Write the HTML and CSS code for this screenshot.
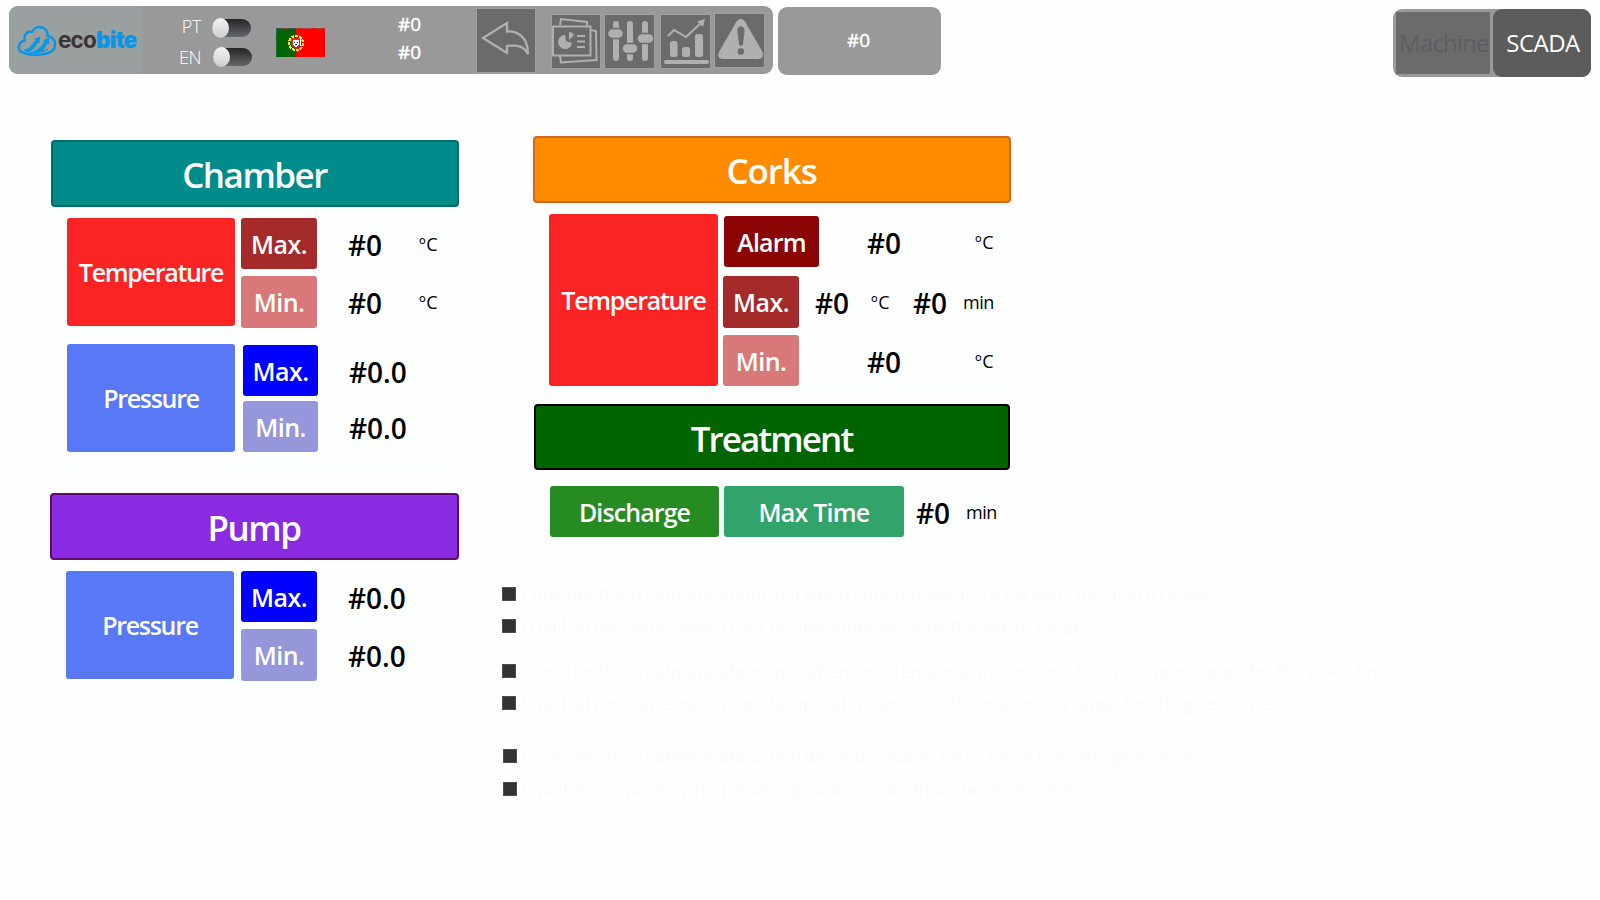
FILE: index.html
```html
<!DOCTYPE html>
<html lang="en">
<head>
<meta charset="utf-8">
<title>Ecobite SCADA settings</title>
<link rel="stylesheet" href="styles.css">
</head>
<body>
<header class="topbar">
  <div class="toolbar">
    <div class="logo">
      <svg class="cloud" width="40" height="32" viewBox="0 0 40 32" fill="none" stroke="#0a96e6" stroke-width="2.5" stroke-linejoin="round">
        <path d="M7 28C3 27 1 24 2 21C2.500 18 5 16 8 15.500C6 10 10 6 15 7C17 3 21 1 25 2.500C29 4 31 7 30.500 11C35 11.500 38 15 38 19C38 24 35 27 31 28C25 30 15 31 7 28Z"/>
        <path d="M7 25C15 23 16 17 19 15L17.500 14L23 12L22.500 18L21 17C18 22 16 26 10 27ZM17 26C24 24 25 19 28 16L26 15.500L32 13L32 19L30 18C28 24 26 26 20 28Z" fill="#0a96e6" stroke-width=".5"/>
        <path d="M12 28C20 27 25 28 31 24" stroke-width="1.500"/>
      </svg>
      <span class="brand">eco<b>bite</b></span>
    </div>
    <div class="langs">
      <div class="lang"><span>PT</span><i class="switch"></i></div>
      <div class="lang lang-en"><span>EN</span><i class="switch"></i></div>
    </div>
    <svg class="flag" width="49" height="29" viewBox="0 0 49 29" shape-rendering="crispEdges">
      <rect width="49" height="29" fill="#f00"/><rect width="20" height="29" fill="#006400"/>
      <path d="M0 .5H49" stroke="#b63c40" stroke-dasharray="12 3 7 2"/><path d="M0 .5H20M.5 0V29" stroke="#27604c" stroke-dasharray="8 3"/>
      <circle cx="20" cy="15" r="7" fill="none" stroke="#f4ef13" stroke-width="2" stroke-dasharray="3 1"/>
      <path d="M15 10H25V17L20 21L15 17Z" fill="#e92520"/><path d="M17 12H23V17L20 19L17 17Z" fill="#fff"/>
      <path d="M18 14H19M21 14H22M19 16H21M24 11V17" stroke="#234cae"/><path d="M24.500 10V18" stroke="#fff"/>
    </svg>
    <div class="counts"><span>#0</span><span>#0</span></div>
    <button class="tool back" aria-label="Back"><svg width="58" height="63" viewBox="0 0 58 63" fill="none" stroke="#b0b0b0" stroke-width="2.300"><path d="M6 29L30 14V22.500C42 22 51 29 51 45C47 37 41 36 30 37V44Z"/></svg></button>
    <button class="tool reports" aria-label="Reports"><svg width="48" height="53" viewBox="0 0 48 53" fill="none" stroke="#b0b0b0" stroke-width="2"><path d="M8 10L9 4L35 7V11M39 15L44 16L44.500 45L9 47.500L8 41"/><path d="M1 11.500H38.500V40.500H1Z"/><path d="M25 21H33M25 26.500H33M25 32H33"/><path d="M13 20A7 7 0 1 0 20 28L14 26Z" fill="#b0b0b0" stroke="none"/><path d="M17 17V25L22 20C21 18 19 17 17 17Z" fill="#b0b0b0" stroke="none"/></svg></button>
    <button class="tool sliders" aria-label="Settings"><svg width="49" height="53" viewBox="0 0 49 53" fill="#b0b0b0"><rect x="8" y="6" width="6" height="40" rx="3"/><rect x="22" y="6" width="6" height="40" rx="3"/><rect x="37" y="6" width="6" height="40" rx="3"/><g stroke="#6b6b6b" stroke-width="1.500"><rect x="2.500" y="13.500" width="16" height="10" rx="5"/><rect x="17" y="28.500" width="16" height="10" rx="5"/><rect x="32" y="18.500" width="17" height="10" rx="5"/></g></svg></button>
    <button class="tool chart" aria-label="Trends"><svg width="49" height="53" viewBox="0 0 49 53" fill="#b0b0b0"><rect x="9" y="26" width="7.500" height="16" rx="2.500"/><rect x="21" y="32" width="8" height="10" rx="2.500"/><rect x="34" y="19" width="8" height="23" rx="2.500"/><rect x="3" y="45" width="45" height="4" rx="2"/><path d="M7 21L13 15L25 22L41 7" fill="none" stroke="#b0b0b0" stroke-width="2"/><path d="M44 4L36 6.500L42 12Z"/></svg></button>
    <button class="tool alarms" aria-label="Alarms"><svg width="49" height="53" viewBox="0 0 49 53"><path d="M21.500 7.500Q25.500 2 30 7.500L47.500 38Q49.500 44.500 43 45H8Q1.500 44.500 4 38Z" fill="#b0b0b0"/><path d="M25.800 12.500C22.500 12.500 22 15 22.500 19L24 30C24.500 32.500 27.500 32.500 28 30L29.300 19C29.800 15 29 12.500 25.800 12.500Z" fill="#6b6b6b"/><circle cx="25.800" cy="37.500" r="3.200" fill="#6b6b6b"/></svg></button>
  </div>
  <div class="status">#0</div>
  <nav class="modes"><span class="mode">Machine</span><span class="mode mode-on">SCADA</span></nav>
</header>

<main class="page">
  <div class="left">
    <section class="panel chamber">
      <h2 class="title teal">Chamber</h2>
      <div class="body">
        <div class="group">
          <div class="tile red">Temperature</div>
          <div class="rows gap7">
            <div class="row"><div class="tag brown">Max.</div><span class="value">#0</span><span class="unit">ºC</span></div>
            <div class="row tall"><div class="tag rose">Min.</div><span class="value">#0</span><span class="unit">ºC</span></div>
          </div>
        </div>
        <div class="group second">
          <div class="tile blue">Pressure</div>
          <div class="rows gap5 inset">
            <div class="row"><div class="tag pure">Max.</div><span class="value">#0.0</span></div>
            <div class="row"><div class="tag lilac">Min.</div><span class="value">#0.0</span></div>
          </div>
        </div>
      </div>
    </section>
    <section class="panel pump">
      <h2 class="title violet">Pump</h2>
      <div class="body">
        <div class="group">
          <div class="tile blue">Pressure</div>
          <div class="rows gap7 shifted">
            <div class="row"><div class="tag pure">Max.</div><span class="value">#0.0</span></div>
            <div class="row tall"><div class="tag lilac">Min.</div><span class="value">#0.0</span></div>
          </div>
        </div>
      </div>
    </section>
  </div>
  <div class="right">
    <section class="panel corks">
      <h2 class="title orange">Corks</h2>
      <div class="body">
        <div class="group">
          <div class="tile red">Temperature</div>
          <div class="rows">
            <div class="row alarm"><div class="tag dark">Alarm</div><span class="value">#0</span><span class="unit">ºC</span></div>
            <div class="row tall max"><div class="tag brown">Max.</div><span class="value">#0</span><span class="unit">ºC</span><span class="value delay">#0</span><span class="unit min">min</span></div>
            <div class="row low"><div class="tag rose">Min.</div><span class="value">#0</span><span class="unit">ºC</span></div>
          </div>
        </div>
      </div>
    </section>
    <section class="panel treatment">
      <h2 class="title green">Treatment</h2>
      <div class="body">
        <div class="row"><div class="tag discharge">Discharge</div><div class="tag maxtime">Max Time</div><span class="value">#0</span><span class="unit min">min</span></div>
      </div>
    </section>
    <ul class="notes">
      <li><i class="check"></i>Consider the treatment abnormal when cork temperature exceeds the alarm range.</li>
      <li><i class="check"></i>Email all recipients when cork temperature exceeds the alarm range.</li>
      <li class="n3"><i class="check"></i>Consider the treatment abnormal when cork temperature exceeds the maximum range for the given time.</li>
      <li><i class="check"></i>Email all recipients when cork temperature exceeds the maximum range for the given time.</li>
      <li class="n5"><i class="check"></i>Consider the treatment abnormal when discharge takes more than the given time.</li>
      <li class="n6"><i class="check"></i>Email all recipients when discharge takes more than the given time.</li>
    </ul>
  </div>
</main>
</body>
</html>
```
FILE: styles.css
```css
* { box-sizing: border-box; }
body {
  margin: 0;
  width: 1600px;
  height: 900px;
  overflow: hidden;
  background: #fefefe;
  font-family: "Open Sans", "Noto Sans", sans-serif;
  color: #000;
}

/* Top bar */
.topbar { display: flex; align-items: flex-start; height: 80px; padding: 6px 9px 0; }
.toolbar {
  display: flex; align-items: flex-start;
  width: 764px; height: 68px;
  background: #999; border-radius: 9px;
}
.logo {
  display: flex; align-items: center;
  width: 134px; height: 68px; padding-left: 8px;
  background: #9a9fa0; border-radius: 9px;
}
.cloud { flex: none; margin-top: 2px; }
.brand {
  margin: 0 0 0 1px;
  font: 700 22.5px/28px Inter, sans-serif;
  letter-spacing: -.8px; color: #3a3532;
}
.brand b { color: #0a96e6; }
.langs { width: 108px; padding-top: 12px; }
.lang { display: flex; align-items: center; justify-content: flex-end; height: 20px; }
.lang span {
  width: 30px; margin-right: 11px; margin-top: -4px;
  font-size: 18px; font-weight: 300; letter-spacing: -.4px;
  text-align: right; color: #fff;
}
.lang-en { margin: 9px -1px 0 0; }
.lang-en span { margin-right: 12px; margin-top: -1px; }
.switch {
  display: flex; align-items: center;
  width: 39px; height: 18px; border-radius: 9px;
  background: linear-gradient(#222426, #65676a);
}
.switch::before {
  content: ""; flex: none; width: 17px; height: 20px;
  border-radius: 50%; background: linear-gradient(#f4f4f4, #ccced0);
}
.flag { margin: 22px 0 0 25px; }
.counts {
  display: flex; flex-direction: column;
  margin: 4px 0 0 73px; width: 25px;
  font-size: 19px; line-height: 28px; color: #fff;
  -webkit-text-stroke: .4px #fff;
}
.tool {
  flex: none; display: block; padding: 0; border: 0;
  background: #6b6b6b; box-shadow: 0 0 0 1px #a0a0a0;
}
.tool svg { display: block; }
.back { margin: 3px 0 0 54px; }
.reports { margin: 9px 0 0 17px; }
.sliders { margin: 9px 0 0 5px; }
.chart { margin: 9px 0 0 7px; }
.alarms { margin: 8px 0 0 5px; }
.status {
  margin: 1px 0 0 5px; width: 163px; height: 68px; padding-right: 2px;
  background: #999; border-radius: 9px;
  color: #fff; font-size: 19px; line-height: 67px; text-align: center;
  -webkit-text-stroke: .4px #fff;
}
.modes {
  display: flex; margin: 3px 0 0 452px; width: 198px; height: 68px;
  background: #999; border-radius: 9px;
}
.mode {
  width: 94px; height: 62px; margin: 3px 0 0 3px; padding-left: 2px;
  background: #6b6b6b; color: #5c5e62;
  font-size: 24px; line-height: 62px; text-align: center; letter-spacing: -.8px;
}
.mode-on {
  width: 98px; height: 68px; margin: 0 0 0 3px; padding-left: 2px;
  background: #5c5c5c; border-radius: 9px; color: #fff; line-height: 68px; letter-spacing: -.5px;
}

/* Panels */
.page { display: flex; }
.left { width: 408px; margin: 60px 0 0 51px; }
.right { width: 480px; margin: 56px 0 0 74px; }
.title {
  margin: 0; height: 67px; border: 2px solid; border-radius: 4px;
  padding-right: 1px;
  font-size: 35px; line-height: 66px; font-weight: 600; letter-spacing: -1.5px;
  text-align: center; color: #fff;
}
.teal { background: #008b8b; border-color: #006c6c; }
.violet { background: #8a2be2; border-color: #5f0a69; }
.orange { background: #ff8c00; border-color: #d2691e; letter-spacing: -1.1px; }
.green { background: #006400; border-color: #000; letter-spacing: -1.9px; }
.body { padding: 11px 0 0 16px; background: #fcfffe; border-radius: 0 0 9px 9px; }
.chamber .body { height: 263px; }
.pump { width: 409px; margin: 23px 0 0 -1px; }
.pump .body { height: 140px; }
.corks { width: 478px; }
.corks .body { height: 191px; }
.treatment { width: 476px; margin: 10px 0 0 1px; }
.treatment .title { height: 66px; }
.treatment .body { height: 90px; padding-top: 16px; }

.group { display: flex; align-items: flex-start; }
.second { margin-top: 16px; }
.tile, .tag {
  flex: none; border-radius: 3px; color: #fff;
  font-size: 25px; font-weight: 600; letter-spacing: -.5px; text-align: center;
}
.tile { width: 168px; height: 108px; line-height: 109px; letter-spacing: -1.3px; }
.corks .tile { width: 169px; height: 172px; line-height: 173px; }
.tag { width: 76px; height: 51px; line-height: 53px; }
.tall .tag { height: 52px; }
.rows { margin-left: 6px; display: flex; flex-direction: column; }
.gap7 { gap: 7px; }
.gap5 { gap: 5px; }
.inset { margin: 1px 0 0 8px; }
.inset .tag { width: 75px; }
.shifted { margin-left: 7px; }
.row { display: flex; height: 51px; }
.tall { height: 52px; }
.value {
  width: 66px; margin-left: 31px;
  font-size: 28px; font-weight: 600; line-height: 54px;
}
.unit { width: 36px; margin-left: 5px; font-size: 18px; line-height: 52px; letter-spacing: .5px; }
.min { letter-spacing: -.5px; }
.red { background: #fb2424; }
.blue { background: #5878f5; }
.brown { background: #a52a2a; }
.rose { background: #d87878; }
.pure { background: #00f; }
.lilac { background: #9696da; }
.dark { background: #8b0505; }

.corks .rows { margin-left: 5px; }
.alarm { margin: 2px 0 0 1px; }
.alarm .tag { width: 95px; letter-spacing: -.8px; }
.alarm .value { margin-left: 48px; width: 103px; }
.max { margin-top: 9px; }
.max .value { margin-left: 16px; width: 52px; }
.max .unit { margin-left: 4px; }
.max .delay { margin-left: 6px; width: 50px; }
.max .unit.min { margin-left: 0; }
.low { margin-top: 7px; }
.low .value { margin-left: 68px; width: 103px; }

.discharge { width: 169px; background: #268b22; letter-spacing: -.9px; }
.maxtime { width: 180px; margin-left: 5px; background: #33a36c; letter-spacing: -.8px; }
.treatment .value { margin-left: 12px; width: 46px; }
.treatment .unit { margin-left: 4px; }

/* Notification options */
.notes {
  list-style: none; margin: 20px 0 0 -31px; padding: 0; width: 1000px;
  color: #fbfbfb; font-size: 18px;
}
.notes li { display: flex; align-items: center; height: 28px; margin-bottom: 4px; line-height: 26px; letter-spacing: -.13px; }
.notes .n3 { margin-top: 17px; }
.notes .n5 { margin: 25px 0 5px 1px; }
.notes .n6 { margin-left: 1px; }
.check {
  flex: none; width: 14px; height: 14px; margin-right: 5px;
  background: #333; border: 1px solid #4d4d4d;
}
```
